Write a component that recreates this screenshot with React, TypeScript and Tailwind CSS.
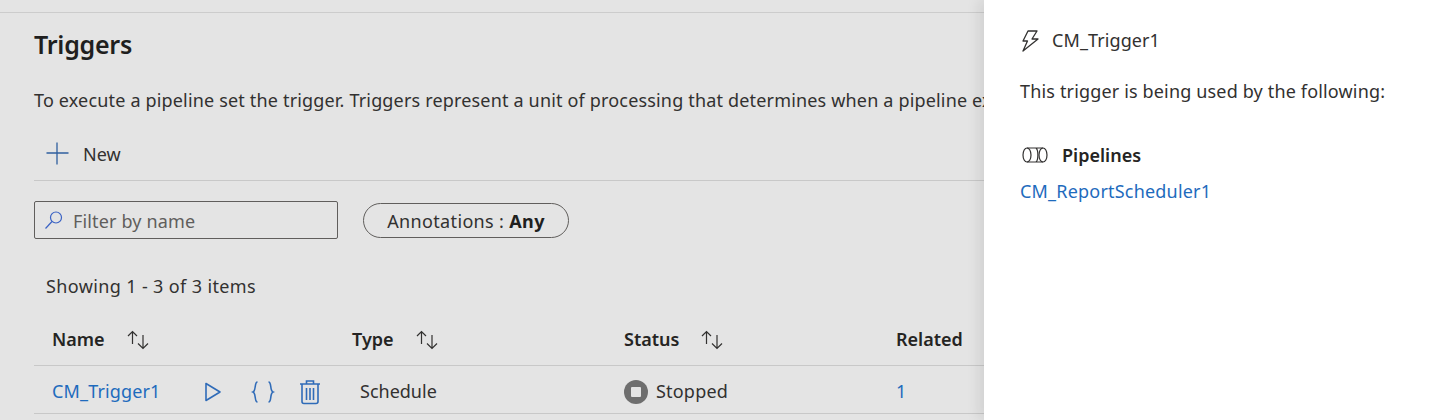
import React from "react";

const Sort = () => (
  <svg width="24" height="20" viewBox="0 0 24 20" fill="none" stroke="#323130" strokeWidth="1.2" className="shrink-0">
    <path d="M7.500 14V1.500M3 6l4.500-4.500L12 6" />
    <path d="M18 5v13.500M13 13.500l5 5 5-5" />
  </svg>
);

export default function App() {
  return (
    <div className="relative w-[1440px] h-[420px] overflow-hidden bg-[#e4e4e4] font-['Noto_Sans',sans-serif] text-[#252423] text-[18px]">
      <div className="pt-3">
        <div className="h-px bg-[#cccccc]" />
        <div className="pl-[34px]">
          <h1 className="mt-[13px] h-9 leading-9 text-[25px] font-semibold tracking-[-0.25px] text-[#201f1e]">Triggers</h1>
          <p className="mt-[26px] h-6 w-[950px] leading-6 whitespace-nowrap tracking-[0.17px] text-[#323130]">
            To execute a pipeline set the trigger. Triggers represent a unit of processing that determines when a pipeline ex
          </p>
          <div className="mt-[22px] h-[47px] w-[950px] flex items-center pl-[11px] pb-[9px] gap-[14px] border-b border-[#c8c8c8]">
            <svg width="24" height="24" viewBox="0 0 24 24" stroke="#2f5f9e" strokeWidth="1.3" fill="none">
              <path d="M12 1.500v22M1.500 12h22" />
            </svg>
            <span className="text-[#323130] mt-1">New</span>
          </div>
          <div className="mt-5 flex items-center gap-[25px]">
            <div className="w-[304px] h-[38px] rounded-[2px] border border-[#605e5c] flex items-center pl-[9px] gap-[9px]">
              <svg width="20" height="20" viewBox="0 0 20 20" fill="none" stroke="#3a62c4" strokeWidth="1.2">
                <circle cx="12" cy="7.500" r="5.500" />
                <path d="M8 11.500L1.500 18.500" />
              </svg>
              <span className="mt-[2px] text-[#605e5c] tracking-[0.15px]">Filter by name</span>
            </div>
            <div className="w-[206px] h-[35px] rounded-full border border-[#605e5c] flex items-center justify-center text-[#323130]">
              <span className="mt-[2px] tracking-[0.35px]">Annotations : <b className="font-bold text-[#201f1e]">Any</b></span>
            </div>
          </div>
          <p className="mt-[35px] ml-3 h-6 leading-6 tracking-[0.37px] text-[#323130]">Showing 1 - 3 of 3 items</p>
          <div className="mt-[20px] grid grid-cols-[318px_272px_272px_1fr] h-[48px] pb-1 items-center border-b border-[#c8c8c8] w-[950px] font-semibold text-[#252423]">
            <div className="flex items-center pl-[18px] gap-[20px]"><span>Name</span><Sort /></div>
            <div className="flex items-center gap-[20px]"><span>Type</span><Sort /></div>
            <div className="flex items-center gap-[20px]"><span>Status</span><Sort /></div>
            <div>Related</div>
          </div>
          <div className="grid grid-cols-[318px_272px_272px_1fr] h-[48px] pt-1 items-center border-b border-[#c8c8c8] w-[950px] text-[#323130]">
            <div className="flex items-center pl-[18px]">
              <span className="text-[#1e6bbd] w-[151px] tracking-[0.15px]">CM_Trigger1</span>
              <svg className="ml-[1px]" width="18" height="22" viewBox="0 0 18 22" fill="none" stroke="#2f6bb8" strokeWidth="1.6">
                <path d="M2 2.500v17L16 11z" strokeLinejoin="round" />
              </svg>
              <svg className="ml-[28px]" width="26" height="24" viewBox="0 0 26 24" fill="none" stroke="#2f6bb8" strokeWidth="1.6">
                <path d="M7.500 2C4 2 6.500 10.500 3 12c3.500 1.500 1 10 4.500 10M18.500 2c3.500 0 1 8.500 4.500 10-3.500 1.500-1 10-4.500 10" />
              </svg>
              <svg className="ml-[23px]" width="22" height="26" viewBox="0 0 22 26" fill="none" stroke="#2f6bb8" strokeWidth="1.6">
                <path d="M1 5h20M7.500 5V2h7v3M3 5v17.500a2 2 0 0 0 2 2h12a2 2 0 0 0 2-2V5M7.500 9v12M11 9v12M14.500 9v12" />
              </svg>
            </div>
            <div className="pl-2">Schedule</div>
            <div className="flex items-center gap-[8px]">
              <span className="w-6 h-6 rounded-full bg-[#6e6e6e] flex items-center justify-center">
                <span className="w-[10px] h-[10px] bg-[#e4e4e4] rounded-[1px]" />
              </span>
              <span className="tracking-[0.2px]">Stopped</span>
            </div>
            <div className="text-[#1e6bbd]">1</div>
          </div>
        </div>
      </div>
      <aside className="absolute top-0 right-0 bottom-0 w-[456px] bg-white shadow-[-6px_0_12px_rgba(0,0,0,0.08)] pl-[36px] text-[#323130]">
        <div className="mt-[28px] h-6 flex items-center gap-[12px]">
          <svg width="20" height="24" viewBox="0 0 20 24" fill="none" stroke="#323130" strokeWidth="1.3" strokeLinejoin="round">
            <path d="M8 3h9l-5 8h6L3 23l4.500-10H3z" />
          </svg>
          <span className="tracking-[0.1px]">CM_Trigger1</span>
        </div>
        <p className="mt-[27px] h-6 leading-6 tracking-[0.16px]">This trigger is being used by the following:</p>
        <div className="mt-[40px] h-6 flex items-center gap-[14px]">
          <svg className="ml-[2px]" width="26" height="18" viewBox="0 0 26 18" fill="none" stroke="#323130" strokeWidth="1.200">
            <ellipse cx="5" cy="9" rx="4" ry="7" />
            <ellipse cx="21" cy="9" rx="4" ry="7" />
            <path d="M5 2h16M5 16h16M14 2c2.500 2 2.500 12 0 14" />
          </svg>
          <span className="font-semibold text-[#252423]">Pipelines</span>
        </div>
        <p className="mt-[12px] h-6 leading-6 tracking-[0.2px] text-[#1e6bbd]">CM_ReportScheduler1</p>
      </aside>
    </div>
  );
}
